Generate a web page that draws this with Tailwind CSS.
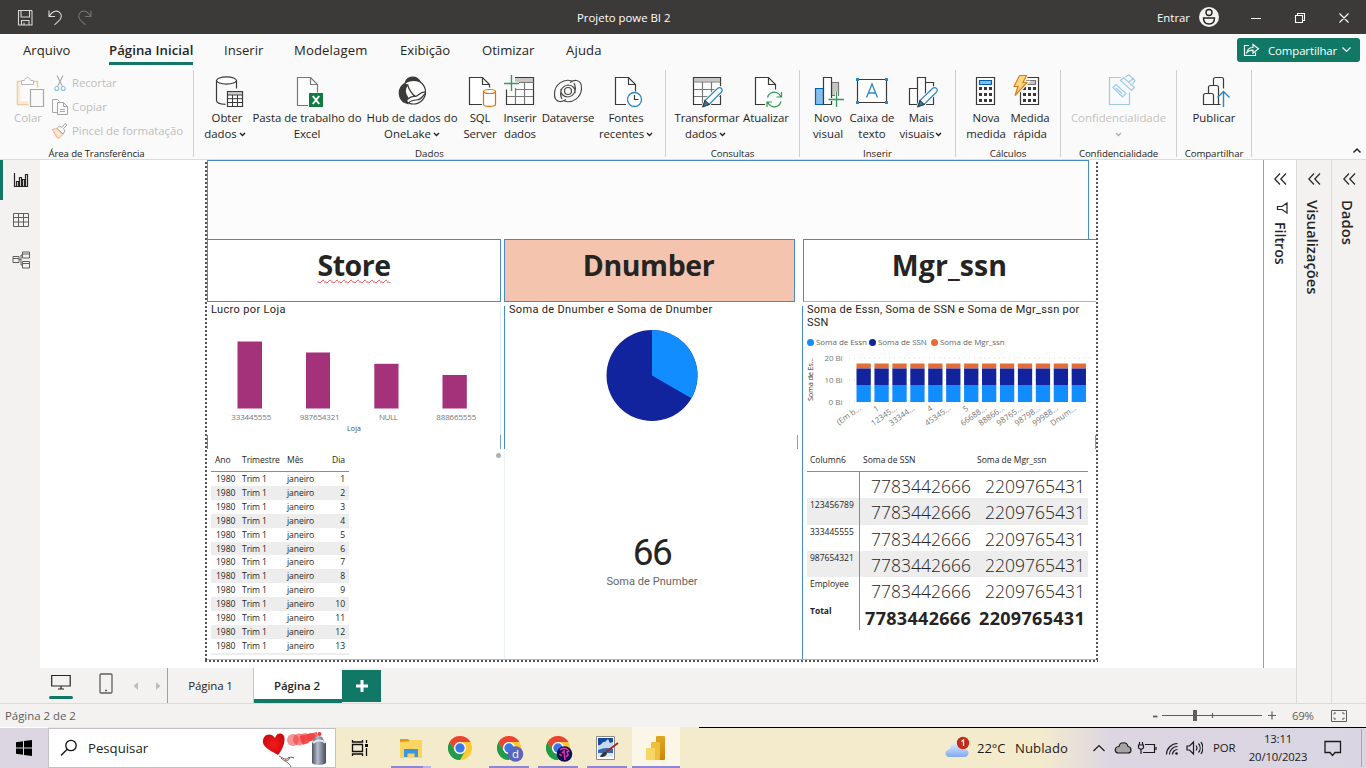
<!DOCTYPE html>
<html lang="pt-BR">
<head>
<meta charset="utf-8">
<title>Projeto powe BI 2</title>
<script src="https://cdn.jsdelivr.net/npm/@tailwindcss/browser@4"></script>
</head>
<body class="w-[1366px] h-[768px] overflow-hidden bg-white text-[#252423] font-['Open_Sans','Noto_Sans',sans-serif] flex flex-col whitespace-nowrap">

<!-- Title bar -->
<header class="relative h-[34px] shrink-0 bg-[#3b3a38] text-white text-[11.4px] flex items-center">
  <svg class="ml-[16px]" width="80" height="20" viewBox="16 7 80 20" fill="none" stroke="#d8d8d8" stroke-width="1.1">
    <path d="M18.5 10.500h13l.5.5v14h-13.500zM21 10.500v6.500h8.500v-6.500M21.500 25v-4.500h7.500v4.500M24 25v-2.500"/>
    <path d="M49 10.500v6h6M49.300 16.200c2.500-4.500 7-6.500 10-4 3 2.600 2.500 6-.5 8.600l-4.300 4"/>
    <path stroke="#74726f" d="M91 10.500v6h-6M90.700 16.200c-2.500-4.500-7-6.500-10-4-3 2.600-2.500 6 .5 8.600l4.300 4"/>
  </svg>
  <div class="w-[94px] ml-[481px] pt-px">Projeto powe BI 2</div>
  <div class="ml-[486px] w-[42px] pt-px">Entrar</div>
  <svg width="167" height="24" viewBox="1199 5 167 24" fill="none">
    <circle cx="1209" cy="17" r="10" fill="#f3f2f1"/>
    <circle cx="1209" cy="12.500" r="3" stroke="#252423" stroke-width="1.400"/>
    <path d="M1203.500 18h11c0 4-2 6-5.500 6s-5.500-2-5.500-6z" stroke="#252423" stroke-width="1.400"/>
    <path d="M1251 18.500h10M1295.500 15.500h7v7h-7zM1297.500 15.500v-2h7v7h-2M1339.500 13.500l9 9M1348.500 13.500l-9 9" stroke="#fff" stroke-width="1.100"/>
  </svg>
</header>

<!-- Ribbon tabs -->
<nav class="h-[34px] shrink-0 bg-[#fafafa] flex text-[13.1px] leading-[33px] pl-[23px]">
  <div class="w-[86px]">Arquivo</div>
  <div class="w-[84px] mr-[31px] h-[31px] font-semibold text-[13.2px] tracking-[0.05px] border-b-[3px] border-[#117865]">Página Inicial</div>
  <div class="w-[70px]">Inserir</div>
  <div class="w-[106px] tracking-[0.15px]">Modelagem</div>
  <div class="w-[82px]">Exibição</div>
  <div class="w-[84px]">Otimizar</div>
  <div class="w-[60px] tracking-[0.15px]">Ajuda</div>
  <div class="ml-auto mr-[6px] mt-[4px] w-[123px] h-[24px] rounded-[3px] bg-[#117865] text-white text-[11.4px] leading-[24px] flex items-center">
    <svg class="ml-[6px] mr-[8px]" width="17" height="16" viewBox="0 0 17 16" fill="none" stroke="#fff" stroke-width="1.200"><path d="M6 3.500H1.500v10h11v-3M4 10.500c.5-3.500 2.800-5 6-5v-3l5.500 4.300-5.500 4.300v-3c-2.700 0-4.500.5-6 2.400z"/></svg>
    <span class="w-[71px] pt-[2px] tracking-[-0.1px]">Compartilhar</span>
    <svg class="ml-[2px]" width="11" height="8" viewBox="0 0 11 8" fill="none" stroke="#fff" stroke-width="1.200"><path d="M1.500 1.500l4 4 4-4"/></svg>
  </div>
</nav>

<!-- Ribbon -->
<section class="relative h-[92px] shrink-0 bg-[#fafafa] border-b border-[#dcdcdc] flex text-[11.4px] leading-[16px] text-center">
  <div class="w-[194px] flex flex-col border-r border-[#d2d0ce] my-[2px]">
    <div class="flex h-[73px] shrink-0 text-[#bfbdbb] text-left">
      <div class="w-[28px] ml-[14px] flex flex-col items-center">
        <svg class="mt-[2px] shrink-0 overflow-visible" width="34" height="38" viewBox="11 72 34 38" fill="none">
          <path d="M21 81.500h-3.500v23h11M34 81.500h3.500v6" stroke="#ecc9a0" stroke-width="1.600"/>
          <path d="M19.500 83v20M19.500 102.500h9" stroke="#fbe9d2" stroke-width="2"/>
          <path d="M21.500 84.500v-4h3c.5-4 5.500-4 6 0h3v4z" fill="#fafafa" stroke="#b9b9b9"/>
          <path d="M30.500 89.500h13v17h-13z" fill="#fafafa" stroke="#a8a8a8" stroke-width="1.200"/>
        </svg>
        <span class="text-[11.6px] tracking-[-0.1px]">Colar</span>
      </div>
      <div class="ml-[9px] pt-[1px] flex flex-col">
        <div class="h-[24px] flex items-center gap-[4px]"><svg width="17" height="18" viewBox="0 0 17 18" fill="none" stroke="#a6a6a6" stroke-width="1.100"><path d="M6 1.500l5.500 11M12 1.500l-5.500 11"/><circle cx="5.800" cy="14.500" r="2" stroke="#92bfdc"/><circle cx="12.200" cy="14.500" r="2" stroke="#92bfdc"/></svg><span class="tracking-[-0.1px]">Recortar</span></div>
        <div class="h-[24px] flex items-center gap-[4px]"><svg width="17" height="18" viewBox="0 0 17 18" fill="none" stroke="#a6a6a6"><path d="M6 14.500H1.500v-13h5l2 2M6.500 4.500h6l4 4v8h-10zM12.500 4.500v4h4M9 11.500h5M9 13.500h5"/></svg>Copiar</div>
        <div class="h-[24px] flex items-center gap-[4px]"><svg width="17" height="18" viewBox="0 0 17 18" fill="none"><path d="M1 7.500l5-1 6 6-4.500 4-3-2.500M4 11l-3-3.500M7.500 16.500L2.500 10" stroke="#e9b88c" fill="#fbe5cf"/><path d="M6 6.500l2.500-2.500 2.500 1.500 3-4 2 1.500-3.500 3.500 1.500 2.500-2 3z" stroke="#a6a6a6" fill="#fafafa"/></svg><span class="tracking-[-0.05px]">Pincel de formatação</span></div>
      </div>
    </div>
    <div class="text-[9.6px] pt-[3px] leading-[16px] tracking-[-0.1px]">Área de Transferência</div>
  </div>

  <div class="w-[472px] flex flex-col border-r border-[#d2d0ce] my-[2px]">
    <div class="flex h-[73px] shrink-0 pt-[2px]">
      <div class="ml-[10px] w-[46px] flex flex-col items-center">
        <svg class="shrink-0" width="34" height="38" viewBox="210 72 34 38" fill="none" stroke="#3b3a39" stroke-width="1.200"><path d="M216.500 80.500v20c0 2 3 3.700 9 3.900M236.500 80.500v8"/><ellipse cx="226.500" cy="80.500" rx="10" ry="3.600" fill="#fff"/><path d="M227.500 91.500h15v15h-15z" fill="#fff"/><path d="M228 92h14v2.500h-14z" fill="#c8c6c4" stroke="none"/><path d="M227.500 95h15M227.500 98.700h15M227.500 102.500h15M232.500 95v11.500M237.500 95v11.500" stroke-width="1"/></svg>
        <span>Obter<br><span class="-ml-[4px]">dados</span><svg class="inline ml-[2px]" width="7" height="5" viewBox="0 0 7 5" fill="none" stroke="#252423" stroke-width="1.400"><path d="M1 1l2.500 2.500L6 1"/></svg></span>
      </div>
      <div class="ml-[2px] w-[110px] flex flex-col items-center">
        <svg class="shrink-0" width="34" height="38" viewBox="290 72 34 38" fill="none" stroke="#797775" stroke-width="1.200"><path d="M308 105.500h-10.500v-28h13l7 7v8" fill="#fff"/><path d="M310.500 77.500v7h7"/><path d="M309 93h14v14h-14z" fill="#107c41" stroke="none"/><path d="M312.800 96l6.400 8M319.200 96l-6.400 8" stroke="#fff" stroke-width="2"/></svg>
        <span class="tracking-[-0.06px]">Pasta de trabalho do<br>Excel</span>
      </div>
      <div class="ml-[2px] w-[96px] flex flex-col items-center">
        <svg class="shrink-0" width="34" height="38" viewBox="395 72 34 38" fill="none" stroke="#3b3a39" stroke-width="1.200"><circle cx="413.500" cy="92" r="12" fill="#fff"/><path d="M405.500 82c2-6 11-7 14.500-.5-4.500-1.500-10-1.500-14.500.5z" fill="#3b3a39"/><path d="M404 84c-6 4-6.500 13-.5 18l4 1.500c-1-2-1-3.500.5-5.500-3-4-4-9-.5-13z" fill="#3b3a39"/><path d="M407.500 84.500c1.500 5 3.500 9 8 12M408 99c2-2 5-3 7-2.500 3 0 5-5 10.500-4.500M408.500 103c3-3 5-3 8-3 4 0 6-3 9-7"/></svg>
        <span>Hub de dados do<br>OneLake<svg class="inline ml-[2px]" width="7" height="5" viewBox="0 0 7 5" fill="none" stroke="#252423" stroke-width="1.400"><path d="M1 1l2.500 2.500L6 1"/></svg></span>
      </div>
      <div class="ml-[3px] w-[34px] flex flex-col items-center">
        <svg class="shrink-0" width="34" height="38" viewBox="463 72 34 38" fill="none" stroke="#3b3a39" stroke-width="1.200"><path d="M482 104.500h-12.500v-27h13l7 7v3" fill="#fff"/><path d="M482.500 77.500v7h7"/><path d="M483.500 91.500v13c0 2.500 12 2.500 12 0v-13" fill="#fff" stroke="#d8730f"/><ellipse cx="489.500" cy="91.500" rx="6" ry="2" fill="#fff" stroke="#d8730f"/></svg>
        <span class="tracking-[-0.15px]">SQL<br>Server</span>
      </div>
      <div class="ml-[6px] w-[34px] flex flex-col items-center">
        <svg class="shrink-0" width="34" height="38" viewBox="503 72 34 38" fill="none" stroke="#3b3a39" stroke-width="1.200"><path d="M515 77.500h18.500v27h-27v-15" fill="#fff"/><path d="M515 78h18v4h-18z" fill="#c8c6c4" stroke="none"/><path d="M519 82.500h14.500M515 89.500h18M507 96.500h26M515.500 88v16M524.500 82v22" stroke="#797775"/><path d="M504 83.500h15M511.500 75v16" stroke="#2f9b57" stroke-width="1.400"/></svg>
        <span class="tracking-[-0.15px]">Inserir<br>dados</span>
      </div>
      <div class="ml-[4px] w-[54px] flex flex-col items-center">
        <svg class="shrink-0" width="34" height="38" viewBox="551 72 34 38" fill="none" stroke="#4a4948" stroke-width="1.200"><path d="M572 81c-9-3-17 4-17.500 12-.3 5 1.500 8 5 8.500 3 .4 5-1 6.500-2"/><path d="M564 101c9 3 17-4 17.500-12 .3-5-1.500-8-5-8.500-3-.4-5 1-6.500 2"/><path d="M562 99c-3-6-1-13 6-14 5 0 8 4 7 8M574 83c3 6 1 13-6 14-5 0-8-4-7-8"/><circle cx="568" cy="91" r="3.500"/></svg>
        <span class="tracking-[-0.1px]">Dataverse</span>
      </div>
      <div class="ml-[3px] w-[56px] flex flex-col items-center">
        <svg class="shrink-0" width="34" height="38" viewBox="609 72 34 38" fill="none" stroke="#3b3a39" stroke-width="1.200"><path d="M626 104.500h-10.500v-27h13l7 7v7" fill="#fff"/><path d="M628.500 77.500v7h7"/><circle cx="634.500" cy="99.500" r="7" fill="#fff" stroke="#2a86c8" stroke-width="1.300"/><path d="M634.500 95v4.500h4"/></svg>
        <span class="tracking-[-0.1px]">Fontes<br>recentes<svg class="inline ml-[2px]" width="7" height="5" viewBox="0 0 7 5" fill="none" stroke="#252423" stroke-width="1.400"><path d="M1 1l2.500 2.500L6 1"/></svg></span>
      </div>
    </div>
    <div class="text-[9.7px] pt-[3px]">Dados</div>
  </div>

  <div class="w-[134px] flex flex-col border-r border-[#d2d0ce] my-[2px]">
    <div class="flex h-[73px] shrink-0 pt-[2px]">
      <div class="ml-[9px] w-[64px] flex flex-col items-center">
        <svg class="shrink-0" width="34" height="38" viewBox="690 72 34 38" fill="none" stroke="#3b3a39" stroke-width="1.200"><path d="M693.500 77.500h27v27h-27z" fill="#fff"/><path d="M694 78h26v3.500h-26z" fill="#c8c6c4" stroke="none"/><path d="M693.500 82h27M694 89.500h26M694 96.500h26M702.500 82v22M711.500 82v22" stroke="#797775"/><path d="M703 106.500l2-6 12.500-12c3-2.500 6 1 4 3.500l-12.500 12.500z" fill="#fff" stroke="#fafafa" stroke-width="3"/><path d="M703 106.500l2-6 12.500-12c3-2.500 6 1 4 3.500l-12.500 12.500z" fill="#fff" stroke="#2a86c8"/><path d="M703 106.500l2-6 4 4z" fill="#2a86c8"/></svg>
        <span class="tracking-[-0.15px]">Transformar<br><span class="-ml-[3px]">dados</span><svg class="inline ml-[2px]" width="7" height="5" viewBox="0 0 7 5" fill="none" stroke="#252423" stroke-width="1.400"><path d="M1 1l2.500 2.500L6 1"/></svg></span>
      </div>
      <div class="ml-[3px] w-[48px] flex flex-col items-center">
        <svg class="shrink-0" width="34" height="38" viewBox="749 72 34 38" fill="none" stroke="#3b3a39" stroke-width="1.200"><path d="M765 104.500h-9.500v-27h13l7 7v5" fill="#fff"/><path d="M768.500 77.500v7h7"/><path d="M767.500 97.500c1-4 5-6.500 9-5 2 .7 3.500 2 4.500 4.500M781.500 92v5h-5M781 101.500c-1 4-5 6.500-9 5-2-.7-3.500-2-4.500-4.500M767 107v-5h5" stroke="#2f9b57"/></svg>
        <span class="tracking-[-0.1px]">Atualizar</span>
      </div>
    </div>
    <div class="text-[9.7px] pt-[3px] tracking-[-0.1px]">Consultas</div>
  </div>

  <div class="w-[156px] flex flex-col border-r border-[#d2d0ce] my-[2px]">
    <div class="flex h-[73px] shrink-0 pt-[2px]">
      <div class="ml-[12px] w-[32px] flex flex-col items-center">
        <svg class="shrink-0" width="34" height="38" viewBox="811 72 34 38" fill="none" stroke="#3b3a39" stroke-width="1.200"><path d="M815.500 88.500h8v16h-8z" fill="#83beec" stroke="#0063b1"/><path d="M831.500 82.500h7v13h-7z" fill="#c8c6c4" stroke="#797775"/><path d="M831.500 97v7.500" stroke="#797775"/><path d="M823.500 77.500h8v27h-8z" fill="#fff"/><path d="M828 99.500h17M836.500 91.500v16" stroke="#fafafa" stroke-width="3"/><path d="M828.500 99.500h15.500M836.500 91.500v15.500" stroke="#2f9b57" stroke-width="1.300"/></svg>
        <span>Novo<br>visual</span>
      </div>
      <div class="ml-[5px] w-[46px] flex flex-col items-center">
        <svg class="shrink-0" width="34" height="38" viewBox="855 72 34 38" fill="none" stroke="#3b3a39" stroke-width="1.200"><path d="M857.500 79.500h29v23h-29z" fill="#fff"/><path d="M866.500 97.500l5.500-13.500 5.500 13.500M868.500 93h7" stroke="#2a86c8" stroke-width="1.300"/><path d="M856 78h3v3h-3zM885 78h3v3h-3zM856 101h3v3h-3zM885 101h3v3h-3z" fill="#2a86c8" stroke="none"/></svg>
        <span>Caixa de<br>texto</span>
      </div>
      <div class="ml-[4px] w-[44px] flex flex-col items-center">
        <svg class="shrink-0" width="34" height="38" viewBox="904 72 34 38" fill="none" stroke="#3b3a39" stroke-width="1.200"><path d="M909.500 88.500h8v16h-8zM925.500 82.500h8v22h-8zM917.500 77.500h8v27h-8z" fill="#fff"/><path d="M918 106.500l2-6 12.500-12c3-2.500 6 1 4 3.500l-12.500 12.500z" fill="#fff" stroke="#fafafa" stroke-width="3"/><path d="M918 106.500l2-6 12.500-12c3-2.500 6 1 4 3.500l-12.500 12.500z" fill="#fff" stroke="#2a86c8"/><path d="M918 106.500l2-6 4 4z" fill="#2a86c8"/></svg>
        <span class="tracking-[-0.1px]">Mais<br>visuais<svg class="inline ml-[1px]" width="7" height="5" viewBox="0 0 7 5" fill="none" stroke="#252423" stroke-width="1.400"><path d="M1 1l2.500 2.500L6 1"/></svg></span>
      </div>
    </div>
    <div class="text-[9.7px] pt-[3px]">Inserir</div>
  </div>

  <div class="w-[105px] flex flex-col border-r border-[#d2d0ce] my-[2px]">
    <div class="flex h-[73px] shrink-0 pt-[2px]">
      <div class="ml-[10px] w-[40px] flex flex-col items-center">
        <svg class="shrink-0" width="34" height="38" viewBox="969 72 34 38" fill="none" stroke="#3b3a39" stroke-width="1.200"><path d="M976.500 77.500h18v27h-18z" fill="#fff"/><path d="M979.500 80.500h12v4h-12z" fill="#83beec" stroke="#0063b1"/><path d="M979 88.500h13M979 94.500h13M979 100.500h13" stroke-width="3" stroke-dasharray="3 2"/></svg>
        <span class="tracking-[-0.1px]">Nova<br>medida</span>
      </div>
      <div class="ml-[4px] w-[40px] flex flex-col items-center">
        <svg class="shrink-0" width="34" height="38" viewBox="1013 72 34 38" fill="none" stroke="#3b3a39" stroke-width="1.200"><path d="M1020.500 77.500h18v27h-18z" fill="#fff"/><path d="M1024 80.500h11.500v4H1024z" fill="#c8c6c4" stroke="#797775"/><path d="M1023 88.500h13M1023 94.500h13M1023 100.500h13" stroke-width="3" stroke-dasharray="3 2"/><path d="M1019.500 75.500h7l-3.500 7h4l-12 13 3-9h-4z" fill="#fad26e" stroke="#fafafa" stroke-width="3.500"/><path d="M1019.500 75.500h7l-3.500 7h4l-12 13 3-9h-4z" fill="#fcd67e" stroke="#e07c1a"/></svg>
        <span class="tracking-[-0.1px]">Medida<br>rápida</span>
      </div>
    </div>
    <div class="text-[9.7px] pt-[3px] tracking-[-0.1px]">Cálculos</div>
  </div>

  <div class="w-[116px] flex flex-col border-r border-[#d2d0ce] my-[2px]">
    <div class="flex flex-col items-center h-[73px] shrink-0 pt-[2px] text-[#c4c2c0]">
      <svg class="shrink-0 ml-[5px]" width="38" height="38" viewBox="1101 72 38 38" fill="none" stroke="#9dcae6" stroke-width="1.200"><path d="M1120 77.500h-11.500v27h20v-12" fill="#f7fafd"/><path d="M1112 87.500l3-3 10 9-3.500 3.500zM1115 88l6 5.500M1119.500 80.500l3-3 11 10-3 3zM1124 77l4-2 6 5.500-2.500 4M1128 82l5-4"/></svg>
      <span class="text-[11.4px]">Confidencialidade</span>
      <svg class="mt-[6px]" width="7" height="5" viewBox="0 0 7 5" fill="none" stroke="#b3b0ad" stroke-width="1.400"><path d="M1 1l2.500 2.500L6 1"/></svg>
    </div>
    <div class="text-[9.7px] pt-[3px] tracking-[-0.1px]">Confidencialidade</div>
  </div>

  <div class="w-[75px] flex flex-col border-r border-[#d2d0ce] my-[2px]">
    <div class="flex flex-col items-center h-[73px] shrink-0 pt-[2px]">
      <svg class="shrink-0" width="34" height="38" viewBox="1197 72 34 38" fill="none" stroke="#3b3a39" stroke-width="1.200"><path d="M1203.500 104.500v-9c0-1.500.5-2 2-2h6c1.500 0 2 .5 2 2v9zM1213.500 104.500h7M1208.500 93v-5.500c0-1.500.5-2 2-2h6c1.500 0 2 .5 2 2v17M1213.500 85v-5.500c0-1.500.5-2 2-2h6c1.500 0 2 .5 2 2v9"/><path d="M1223.500 107V91.500M1217.500 97.500l6-6 6 6" stroke="#2a86c8" stroke-width="1.400"/></svg>
      <span>Publicar</span>
    </div>
    <div class="text-[9.7px] pt-[3px] tracking-[-0.1px]">Compartilhar</div>
  </div>
  <svg class="ml-auto mr-[4px] mt-[79px]" width="10" height="7" viewBox="0 0 10 7" fill="none" stroke="#252423" stroke-width="1.500"><path d="M1.500 5.500L5 2l3.500 3.500"/></svg>
</section>

<!-- Workspace -->
<div class="h-[544px] shrink-0 flex bg-[#f3f2f1] border-b border-[#dddbd9]">
  <div class="flex flex-col w-[1296px]">
    <div class="flex h-[508px]">
      <aside class="w-[40px] bg-[#f3f2f1] shrink-0">
        <div class="h-[40px] border-l-[3px] border-[#117865] flex items-center pl-[10px]"><svg width="17" height="16" viewBox="0 0 17 16" fill="none" stroke="#252423" stroke-width="1.200"><path d="M1.500 1v13.500H15M3.500 9.500h2v5h-2zM6.500 5.500h2v9h-2zM9.500 7.500h2v7h-2zM12.500 2.500h2v12h-2z"/></svg></div>
        <div class="h-[40px] flex items-center pl-[13px]"><svg width="17" height="16" viewBox="0 0 17 16" fill="none" stroke="#605e5c"><path d="M.5 1.500h15v13H.5zM.5 5.500h15M.5 10h15M5.500 1.500v13M10.500 1.500v13"/></svg></div>
        <div class="h-[40px] flex items-center pl-[12px]"><svg width="19" height="18" viewBox="0 0 19 18" fill="none" stroke="#605e5c"><path d="M1 5.500h6v6H1zM1 7.500h6M10.500 1h7v6h-7zM10.500 3h7M10.500 10.500h7v6.500h-7zM10.500 12.500h7M7 8.500h2M10.500 4H9v10h1.500"/></svg></div>
      </aside>

      <!-- Report canvas -->
      <main class="relative w-[1223px] bg-white overflow-hidden">
        <div class="absolute left-[167px] top-0 w-[882px] h-[80px] bg-[#fcfcfc] border-t border-l border-r border-[#4a8bc4]"></div>
        <div class="absolute left-[167px] top-[79px] w-[294px] h-[63px] bg-white border border-[#4a8bc4] text-center text-[28.5px] leading-[51px] font-bold"><span class="underline decoration-wavy decoration-[#f04848] decoration-[1px] underline-offset-[3px] tracking-[-0.5px]">Store</span></div>
        <div class="absolute left-[464px] top-[79px] w-[291px] h-[63px] bg-[#f4c4af] border border-[#4a8bc4] pr-[2px] text-center text-[28.5px] leading-[51px] font-bold tracking-[-0.4px]">Dnumber</div>
        <div class="absolute left-[763px] top-[79px] w-[294px] h-[63px] bg-white border border-[#4a8bc4] border-b-[#8fbce0] border-r-0 pr-[2px] text-center text-[28.5px] leading-[51px] font-bold tracking-[0.1px]">Mgr_ssn</div>

        <!-- Visual frame guides -->
        <div class="absolute left-[460px] top-[146px] w-px h-[129px] bg-[#dcebf7]"></div>
        <div class="absolute left-[464px] top-[146px] w-px h-[143px] bg-[#4a8bc4]"></div>
        <div class="absolute left-[464px] top-[289px] w-px h-[210px] bg-[#eaf3fa]"></div>
        <div class="absolute left-[762px] top-[146px] w-px h-[354px] bg-[#4a8bc4]"></div>
        <div class="absolute left-[167px] top-[275px] w-px h-[14px] bg-[#4a8bc4]"></div>
        <div class="absolute left-[460px] top-[275px] w-px h-[14px] bg-[#6da4d4]"></div>
        <div class="absolute left-[757px] top-[275px] w-px h-[14px] bg-[#6da4d4]"></div>
        <div class="absolute left-[1055px] top-[275px] w-px h-[14px] bg-[#6da4d4]"></div>
        <div class="absolute left-[456px] top-[293px] w-[5px] h-[5px] rounded-full bg-[#b3b0ad]"></div>

        <!-- Column chart -->
        <div class="absolute left-[168px] top-[142px] w-[292px]">
          <h3 class="ml-[3px] pt-px h-[14px] text-[11px] leading-[14px] font-['Roboto',sans-serif] tracking-[0.35px]">Lucro por Loja</h3>
          <svg width="292" height="124" viewBox="208 316 292 124" font-size="8" fill="#777" text-anchor="middle">
            <g fill="#a4327a"><rect x="237.500" y="341.500" width="24.500" height="67"/><rect x="306" y="352.500" width="24" height="56"/><rect x="374.300" y="363.800" width="24.200" height="44.700"/><rect x="442.500" y="375" width="24.300" height="33.500"/></g>
            <text x="251.300" y="420" textLength="40">333445555</text><text x="319.700" y="420" textLength="40">987654321</text><text x="388.500" y="420" textLength="19">NULL</text><text x="456.300" y="420" textLength="40">888665555</text>
            <text x="354" y="431" font-size="7" fill="#444" textLength="14">Loja</text>
          </svg>
        </div>

        <!-- Pie chart -->
        <div class="absolute left-[466px] top-[142px] w-[290px]">
          <h3 class="ml-[3px] pt-px h-[14px] text-[11px] leading-[14px] font-['Roboto',sans-serif] tracking-[0.33px]">Soma de Dnumber e Soma de Dnumber</h3>
          <svg width="290" height="124" viewBox="506 316 290 124"><circle cx="652" cy="375.500" r="45.500" fill="#12239e"/><path d="M652 375.500V330a45.500 45.500 0 0 1 39.400 68.250z" fill="#118dff"/></svg>
        </div>

        <!-- Stacked column chart -->
        <div class="absolute left-[764px] top-[142px] w-[292px]">
          <h3 class="ml-[3px] pt-px h-[26px] text-[11px] leading-[13px] font-['Roboto',sans-serif] tracking-[0.28px]">Soma de Essn, Soma de SSN e Soma de Mgr_ssn por<br>SSN</h3>
          <div class="mt-[8px] ml-[3px] h-[12px] flex items-center text-[8px] text-[#666] leading-[12px] tracking-[-0.05px]">
            <i class="w-[7px] h-[7px] rounded-full bg-[#118dff] mr-[2px]"></i><span class="w-[53px]">Soma de Essn</span>
            <i class="w-[7px] h-[7px] rounded-full bg-[#12239e] mr-[2px]"></i><span class="w-[53px]">Soma de SSN</span>
            <i class="w-[7px] h-[7px] rounded-full bg-[#e66c37] mr-[2px]"></i><span>Soma de Mgr_ssn</span>
          </div>
          <svg id="stack" width="292" height="92" viewBox="804 348 292 92" font-size="8" fill="#777" text-anchor="end">
            <path d="M849 358h243M849 380h243M849 402h243" stroke="#ddd" stroke-dasharray="1 4"/>
            <text x="842.500" y="361" textLength="18">20 Bi</text><text x="842.500" y="383" textLength="18">10 Bi</text><text x="842.500" y="405" textLength="14">0 Bi</text>
            <text transform="translate(813 358) rotate(-90)" font-size="7.500" fill="#333" textLength="43">Soma de Es...</text>
          </svg>
        </div>

        <!-- Date table -->
        <div class="absolute left-[171px] top-[289px] w-[138px] h-[206px] overflow-hidden text-[8.600px] tracking-[-0.100px]">
          <div class="flex h-[23px] leading-[22px] border-b border-[#4a9be8]"><span class="w-[31px] pl-[4px]">Ano</span><span class="w-[45px]">Trimestre</span><span class="w-[36px]">Mês</span><span class="w-[22px] text-right">Dia</span></div>
          <div id="dates"></div>
        </div>

        <!-- Card -->
        <div class="absolute left-[466px] top-[370px] w-[292px] text-center font-['Roboto',sans-serif]">
          <div class="text-[37px] leading-[45px] tracking-[-1.500px]">66</div>
          <div class="text-[11px] leading-[14px] text-[#666] tracking-[0.050px]">Soma de Pnumber</div>
        </div>

        <!-- Matrix -->
        <div class="absolute left-[767px] top-[289px] w-[281px] text-[8.500px]">
          <div class="flex h-[23px] leading-[22px] border-b border-[#4a9be8]"><span class="w-[56px] pl-[3px]">Column6</span><span class="w-[114px]">Soma de SSN</span><span>Soma de Mgr_ssn</span></div>
          <div id="matrix"></div>
        </div>

        <!-- Page boundary -->
        <div class="absolute left-[165px] top-0 w-[2px] h-[501px] bg-[repeating-linear-gradient(to_bottom,#fff_0_2px,#555_2px_4px)]"></div>
        <div class="absolute left-[1056px] top-0 w-[2px] h-[501px] bg-[repeating-linear-gradient(to_bottom,#fff_0_2px,#555_2px_4px)]"></div>
        <div class="absolute left-[167px] top-[499px] w-[889px] h-px bg-[#8fbce0]"></div>
        <div class="absolute left-[165px] top-[500px] w-[893px] h-[2px] bg-[repeating-linear-gradient(to_right,#555_0_2px,#fff_2px_4px)]"></div>
      </main>

      <aside class="w-[33px] bg-white border-l border-[#a19f9d] flex flex-col items-center pt-[13px] text-[14.200px] font-semibold">
        <svg width="13" height="12" viewBox="0 0 13 12" fill="none" stroke="#252423" stroke-width="1.200"><path d="M6 .5L.8 6 6 11.500M12 .5L6.800 6l5.200 5.500"/></svg>
        <svg class="mt-[17px] ml-[2px]" width="13" height="12" viewBox="0 0 13 12" fill="none" stroke="#252423" stroke-width="1.200"><path d="M12 1v10L7 7.500H2.500v-3H7z"/></svg>
        <span class="mt-[8px] [writing-mode:vertical-rl]">Filtros</span>
      </aside>
    </div>

    <!-- Page tabs -->
    <div class="flex h-[35px] text-[11.500px] leading-[35px] text-center">
      <div class="w-[46px] ml-[38px] flex flex-col items-center"><svg class="mt-[6px]" width="20" height="17" viewBox="0 0 20 17" fill="none" stroke="#252423" stroke-width="1.200"><path d="M.7 1.500h18.500v10.500H.7zM10 12v3M7 15h6"/></svg><i class="mt-[5px] w-[24px] h-[3px] rounded bg-[#117865]"></i></div>
      <svg class="ml-[15px] mt-[5px]" width="14" height="21" viewBox="0 0 14 21" fill="none" stroke="#605e5c" stroke-width="1.300"><rect x="1" y="1" width="12" height="19" rx="1"/><path d="M6 17.500h2"/></svg>
      <svg class="ml-[19px] mt-[13px]" width="30" height="10" viewBox="0 0 30 10" fill="#c0bebc"><path d="M6 1v8L1.500 5zM24 1v8l4.500-4z"/></svg>
      <div class="ml-[5px] w-[87px] border-l border-r border-[#a19f9d] border-r-[#c8c6c4] tracking-[-0.1px]">Página 1</div>
      <div class="w-[88px] bg-white border-b-4 border-[#117865] font-semibold tracking-[-0.1px] h-[35px] pr-[2px]">Página 2</div>
      <div class="w-[39px] h-[32px] mt-[2px] bg-[#117865] flex items-center justify-center"><svg width="12" height="12"><path d="M6 0v12M0 6h12" stroke="#fff" stroke-width="3"/></svg></div>
    </div>
  </div>
  <aside class="w-[35px] border-l border-[#dddbd9] flex flex-col items-center pt-[13px] text-[14.800px] font-semibold">
    <svg width="13" height="12" viewBox="0 0 13 12" fill="none" stroke="#252423" stroke-width="1.200"><path d="M6 .5L.8 6 6 11.500M12 .5L6.800 6l5.200 5.500"/></svg>
    <span class="mt-[15px] mr-[2px] [writing-mode:vertical-rl]">Visualizações</span>
  </aside>
  <aside class="w-[35px] border-l border-[#dddbd9] flex flex-col items-center pt-[13px] text-[14.800px] font-semibold">
    <svg width="13" height="12" viewBox="0 0 13 12" fill="none" stroke="#252423" stroke-width="1.200"><path d="M6 .5L.8 6 6 11.500M12 .5L6.800 6l5.200 5.500"/></svg>
    <span class="mt-[15px] mr-[3px] [writing-mode:vertical-rl]">Dados</span>
  </aside>
</div>

<!-- Status bar -->
<footer class="h-[23px] shrink-0 bg-[#f3f2f1] flex items-center pl-[5px] text-[11.400px] text-[#605e5c]">
  <span class="pt-px">Página 2 de 2</span>
  <svg class="ml-auto" width="126" height="16" viewBox="1152 708 126 16" fill="none" stroke="#605e5c" stroke-width="1.200"><path d="M1153 716.500h4.500" stroke-width="1.800"/><path d="M1162 715.500h100M1212.500 713v5M1268 715.500h8M1272 711.500v8"/><path d="M1193 710h4v11h-4z" fill="#605e5c" stroke="none"/></svg>
  <span class="ml-[14px] w-[24px] pt-px tracking-[-0.300px]">69%</span>
  <svg class="ml-[15px] mr-[19px]" width="16" height="12" viewBox="0 0 16 12" fill="none" stroke="#605e5c"><path d="M.5.500h15v11H.5zM3 4.500V3h2M11 3h2v1.500M3 7.500V9h2M11 9h2V7.500"/></svg>
</footer>

<!-- Taskbar -->
<div class="h-[41px] shrink-0 flex items-stretch bg-[linear-gradient(to_right,#dcd6e3_0px,#dcd6e3_48px,#f4ebcd_49px,#f4ebcd_1040px,#dcd6e2_1110px,#dad5e2_1366px)]">
  <div class="w-[48px] flex items-center justify-center border-t border-white"><svg width="16" height="16"><path d="M0 2.200L7 1.200v6.300H0zM8 1.100L16 0v7.500H8zM0 8.500h7v6.300L0 13.800zM8 8.500h8V16l-8-1.100z"/></svg></div>
  <div class="w-[288px] mt-px bg-white border border-[#c4c2c4] flex items-center text-[14px] text-[#222]">
    <svg class="ml-[11px]" width="18" height="18" fill="none" stroke="#111" stroke-width="1.300"><circle cx="11" cy="6.500" r="5.200"/><path d="M7.200 10.300L1 16.500"/></svg>
    <span class="ml-[10px] w-[62px] pt-px text-[13.200px]">Pesquisar</span>
    <svg class="ml-[110px] overflow-visible" width="68" height="38" viewBox="260 729 68 38" fill="none">
      <defs><linearGradient id="can"><stop stop-color="#4d5262"/><stop offset=".4" stop-color="#b5bccb"/><stop offset="1" stop-color="#454b5c"/></linearGradient><radialGradient id="heart"><stop stop-color="#f31c1c"/><stop offset="1" stop-color="#cf0a10"/></radialGradient></defs>
      <path d="M278 755c-5-3-14-7-15-12-1-9 8-11 12-5 2-7 10-5 9.500 1 0 6-3 12-6.500 16z" fill="url(#heart)"/>
      <path d="M279 756c3 1 5 4 8 3 4-4 3 3-2 1M281 758c3 3 9 5 10 9M288 758l3-1 3 1" stroke="#7b5c58"/>
      <g fill="#f23b3b"><circle cx="293" cy="740" r="6" opacity=".55"/><circle cx="299" cy="739.500" r="6" opacity=".6"/><circle cx="305" cy="738.500" r="5.500" opacity=".6"/><circle cx="311" cy="737" r="4" opacity=".7"/><path d="M300 736l17-4 1 5-15 8z" opacity=".8"/><circle cx="319.500" cy="734" r="2"/></g>
      <path d="M314 739c0-4 9-4 9 0l3 4v20c-2 2.500-12 2.500-14 0v-20z" fill="url(#can)"/><path d="M313 743c3-3.500 10-3.500 12.500 0" stroke="#e4e7ed" stroke-width="2"/>
    </svg>
  </div>
  <div class="w-[48px] flex items-center justify-center"><svg width="18" height="18" fill="none" stroke="#111" stroke-width="1.300"><path d="M1.500 5.500h10v7h-10zM1.500 1v2h10V1M1.500 17v-2h10v2M15.500 1v3M15.500 9v8"/><path d="M14 5h3v3h-3z" fill="#111" stroke="none"/></svg></div>
  <div class="w-[54px] flex flex-col items-center pt-[11px]">
    <svg width="24" height="22" viewBox="399 738 24 22"><path d="M400 739h8l2 2v4h-10z" fill="#d99e12"/><path d="M400 742l9-.5 2-1.500h11v18h-22z" fill="#fcd462"/><path d="M404 749h14v8h-3.500v-3.500h-7V757H404z" fill="#3a96dd"/></svg>
    <i class="mt-auto w-[40px] h-[2px] bg-[linear-gradient(to_right,#8f86d6_0_32px,#b9b3e6_32px)]"></i>
  </div>
  <div class="w-[44px] flex flex-col items-center pt-[9px]"><svg width="24" height="24" viewBox="0 0 24 24"><use href="#chrome"/></svg></div>
  <div class="w-[49px] flex flex-col items-center pt-[9px] ml-[2px]">
    <svg class="ml-[5px]" width="28" height="26" viewBox="0 0 28 26"><use href="#chrome"/><circle cx="18.500" cy="18" r="7.800" fill="#5867bd"/><text x="18.500" y="22" text-anchor="middle" font-size="11.500" fill="#fff">d</text></svg>
    <i class="mt-auto w-[40px] h-[2px] bg-[#8f86d6]"></i>
  </div>
  <div class="w-[49px] flex flex-col items-center pt-[9px]">
    <svg class="ml-[5px]" width="28" height="26" viewBox="0 0 28 26"><use href="#chrome"/><circle cx="18.500" cy="18" r="7.800" fill="#120d54"/><path d="M14 14c3-3 8-2 9 2M16 17l2-2 1 9M21 15l1 4-2 2M13.500 18l2 2" stroke="#e0379f" stroke-width="1.500" fill="none"/></svg>
    <i class="mt-auto w-[40px] h-[2px] bg-[#8f86d6]"></i>
  </div>
  <div class="w-[50px] flex flex-col items-center pt-[9px] pr-px">
    <svg width="24" height="24" viewBox="0 0 24 24"><path d="M1.500.5h18v23h-18z" fill="#fff" stroke="#8a8a8a"/><path d="M3 2h15v15H3z" fill="#174a9c"/><path d="M3 9c4 1 4-4 7-3l3-3 2 4 3-1v9H3z" fill="#c6daf2"/><path d="M3 14c5-2 9-3 15-1v4H3z" fill="#3567b0"/><path d="M3 17h15v4H3z" fill="#dde4ee"/><path d="M11 16l12-9" stroke="#a22b2b" stroke-width="2"/><path d="M5 21c1-3 3-5 6-5l1 1.500c-1 3-4 3.500-7 3.500z" fill="#333"/></svg>
    <i class="mt-auto w-[40px] h-[2px] bg-[#8f86d6]"></i>
  </div>
  <div class="w-[48px] flex flex-col items-center pt-[9px] bg-[#fbf6e8]">
    <svg width="20" height="24" viewBox="0 0 20 24"><defs><linearGradient id="pb" x2="0" y2="1"><stop stop-color="#e0a81e"/><stop offset="1" stop-color="#cc8610"/></linearGradient></defs><rect x="10" width="9" height="24" rx="1" fill="url(#pb)"/><rect x="5" y="6" width="9" height="18" rx="1" fill="#ecc03d"/><rect y="12" width="9" height="12" rx="1" fill="#f6d765"/></svg>
    <i class="mt-auto w-[48px] h-[2px] bg-[#8f86d6]"></i>
  </div>
  <div class="grow flex items-center border-t border-black text-[13.100px] text-[#1a1a1a] ml-[19px]">
    <svg class="ml-[245px]" width="26" height="24" viewBox="944 735 26 24"><defs><linearGradient id="cl" x2="0" y2="1"><stop stop-color="#dcebff"/><stop offset="1" stop-color="#7da9ec"/></linearGradient></defs><path d="M950 756c-6 0-6-7 0-8 1-7 12-8 14 0 6 0 6 8 0 8z" fill="url(#cl)"/><circle cx="963" cy="742" r="6.200" fill="#c42b1c"/><path d="M961.500 740.500l2-1.500v6" stroke="#fff" fill="none" stroke-width="1.200"/></svg>
    <span class="ml-[7px] w-[38px] pt-px tracking-[-0.100px]">22°C</span><span class="w-[62px] pt-px tracking-[0.100px]">Nublado</span>
    <svg class="ml-[14px]" width="112" height="20" viewBox="1091 738 112 20" fill="none" stroke="#1a1a1a" stroke-width="1.200">
      <path d="M1093.500 751l5.500-5.500 5.500 5.500"/>
      <path d="M1119 753c-5 0-5-6 0-6.500 1-5 8-5 9 0 4 .5 4 6.500 0 6.500z" fill="#a5a5a5"/>
      <path d="M1145 744.500h9.500v8H1143M1156 747v3M1139.500 742v3M1142.500 742v3M1138.500 745h5v3l-2.500 1.500-2.500-1.500zM1141 749v5"/>
      <path d="M1166.500 754.500c0-6 5-11 11-11M1169.500 754.500c0-4.500 3.500-8 8-8M1172.500 754.500c0-2.700 2.200-5 5-5" /><circle cx="1176.500" cy="753.500" r="1.300" fill="#1a1a1a" stroke="none"/>
      <path d="M1187 746h2.500l4-4v12l-4-4h-2.500zM1196 745.500c1.200 1.500 1.200 3.500 0 5M1198.500 743.500c2.200 2.700 2.200 6.500 0 9M1201 742c2.500 4 2.500 8 0 12"/>
    </svg>
    <span class="ml-[10px] w-[22px] text-[11.400px] tracking-[-0.100px]">POR</span>
    <span class="ml-[13px] w-[60px] text-center text-[11.300px] leading-[18px] tracking-[-0.150px] flex flex-col items-center">13:11<span>20/10/2023</span></span>
    <svg class="ml-[16px]" width="18" height="17" fill="none" stroke="#1a1a1a" stroke-width="1.300"><path d="M1 1.500h15.500v11H11l-2.500 3-2.500-3H1z"/></svg>
    <i class="ml-auto mr-[4px] w-px h-[38px] bg-[#a9a4b0]"></i>
  </div>
</div>

<svg width="0" height="0" class="absolute"><defs><g id="chrome"><circle cx="12" cy="12" r="12" fill="#fcc934"/><path d="M1.600 6A12 12 0 0 1 22.400 6H12a6 6 0 0 0-5.200 9z" fill="#ea4335"/><path d="M1.600 6A12 12 0 0 0 12 24l5.200-9a6 6 0 0 1-10.400 0z" fill="#1e9b4b"/><circle cx="12" cy="12" r="6" fill="#fff"/><circle cx="12" cy="12" r="4.700" fill="#3b78e7"/></g></defs></svg>

<script>
  let rows = '';
  for (let d = 1; d <= 13; d++) {
    rows += '<div class="flex h-[13.920px] leading-[14px] ' + (d % 2 ? '' : 'bg-[#ededed]') + '"><span class="w-[31px] pl-[5px]">1980</span><span class="w-[45px]">Trim 1</span><span class="w-[36px]">janeiro</span><span class="w-[22px] text-right">' + d + '</span></div>';
  }
  rows += '<div class="h-[2px] bg-[#ededed]"></div>';
  document.getElementById('dates').innerHTML = rows;

  let m = '';
  ['', '123456789', '333445555', '987654321', 'Employee', 'Total'].forEach((name, i) => {
    const total = name === 'Total';
    const num = total ? 'text-[18px] tracking-[0.300px]' : 'text-[17.500px] font-[350]';
    m += '<div class="flex h-[26.350px] ' + (i % 2 && !total ? 'bg-[#ededed]' : '') + (total ? ' font-bold' : '') + '">'
      + '<span class="w-[53px] pl-[3px] leading-[14.500px] border-r border-[#4a9be8]">' + name + '</span>'
      + '<span class="w-[111px] text-right leading-[29px] ' + num + '">7783442666</span>'
      + '<span class="w-[114px] text-right leading-[29px] ' + num + '">2209765431</span></div>';
  });
  document.getElementById('matrix').innerHTML = m;

  let bars = '';
  ['(Em b...', '1', '12345...', '33344...', '4', '45345...', '5', '66688...', '88866...', '98765...', '98798...', '99988...', 'Dnum...'].forEach((t, i) => {
    const x = 856.5 + i * 17.93;
    bars += `<rect x="${x}" y="363.5" width="14.300" height="5" fill="#e66c37"/><rect x="${x}" y="368.500" width="14.300" height="16.500" fill="#12239e"/><rect x="${x}" y="385" width="14.300" height="17" fill="#118dff"/>`
      + `<text transform="translate(${x + 5} 409.5) rotate(-35)">${t}</text>`;
  });
  document.getElementById('stack').innerHTML += bars;
</script>
</body>
</html>
